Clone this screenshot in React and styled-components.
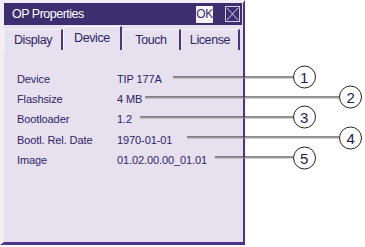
import React from "react";
import styled, { createGlobalStyle } from "styled-components";

const Global = createGlobalStyle`
  html, body { margin: 0; padding: 0; background: #ffffff; }
  body { font-family: "Liberation Sans", Arial, sans-serif; }
`;

const Page = styled.div`
  position: relative;
  width: 365px;
  height: 247px;
  background: #ffffff;
  overflow: hidden;
`;

const Window = styled.div`
  box-sizing: border-box;
  width: 245px;
  height: 245px;
  background: #e7e0ee;
  border-left: 4px solid #f2eef6;
  border-top: 3px solid #f2eef6;
  border-right: 2px solid #4a3589;
  border-bottom: 3px solid #4a3589;
  display: flex;
  flex-direction: column;
`;

const TitleBar = styled.div`
  height: 22px;
  margin-right: 1px;
  background: #3d2f6f;
  display: flex;
  align-items: center;
  padding: 0 2px 0 8px;
  color: #ffffff;
`;

const Title = styled.div`
  flex: 1;
  font-size: 12.5px;
  letter-spacing: -0.5px;
`;

const OkButton = styled.div`
  width: 17px;
  height: 17px;
  background: #f6f3f9;
  color: #3d2f6f;
  font-size: 12px;
  letter-spacing: -0.5px;
  display: flex;
  align-items: center;
  justify-content: center;
  margin-right: 12px;
`;

const CloseButton = styled.div`
  box-sizing: border-box;
  width: 15px;
  height: 16px;
  border: 1px solid #d4cce3;
  display: flex;
  align-items: center;
  justify-content: center;
`;

const TabRow = styled.div`
  height: 25px;
  display: flex;
  align-items: flex-end;
`;

const Tab = styled.div`
  box-sizing: border-box;
  width: 59px;
  height: ${(p) => (p.$selected ? 24 : 21)}px;
  border-top: 1px solid ${(p) => (p.$selected ? "#fdfcfe" : "#f3f0f7")};
  border-left: 1px solid ${(p) => (p.$selected ? "#fdfcfe" : "#f3f0f7")};
  border-right: 2px solid #4a3589;
  border-top-left-radius: 3px;
  background: #e7e0ee;
  color: #2b2566;
  font-size: 12.5px;
  letter-spacing: -0.4px;
  display: flex;
  align-items: center;
  justify-content: center;
  padding-bottom: ${(p) => (p.$selected ? 1 : 0)}px;
`;

const Content = styled.div`
  padding: 19px 0 0 13px;
  display: flex;
  flex-direction: column;
`;

const Row = styled.div`
  position: relative;
  height: 20.2px;
  display: flex;
  align-items: center;
  font-size: 11px;
  color: #2b2566;
  letter-spacing: -0.1px;
`;

const Label = styled.div`
  width: 100px;
`;

const Value = styled.div``;

const Callout = styled.div`
  position: absolute;
  left: ${(p) => p.$left}px;
  width: ${(p) => p.$width}px;
  top: 50%;
  transform: translateY(-50%);
  margin-top: -2px;
  display: flex;
  align-items: center;
`;

const Leader = styled.div`
  flex: 1;
  height: 0;
  border-top: 1px solid #1e1e1e;
  border-bottom: 1px solid #a0a0a0;
`;

const Bubble = styled.div`
  box-sizing: border-box;
  width: 23px;
  height: 23px;
  border: 1px solid #222222;
  border-radius: 50%;
  background: #ffffff;
  color: #1b1b5a;
  font-size: 15px;
  display: flex;
  align-items: center;
  justify-content: center;
`;

const ROW_X = 17;
const NEAR = 315.5;
const FAR = 362;

const rows = [
  { label: "Device", value: "TIP 177A", start: 173, end: NEAR, n: 1 },
  { label: "Flashsize", value: "4 MB", start: 145, end: FAR, n: 2 },
  { label: "Bootloader", value: "1.2", start: 140, end: NEAR, n: 3 },
  { label: "Bootl. Rel. Date", value: "1970-01-01", start: 187, end: FAR, n: 4 },
  { label: "Image", value: "01.02.00.00_01.01", start: 215, end: NEAR, n: 5 },
];

const tabs = ["Display", "Device", "Touch", "License"];

export default function App() {
  return (
    <>
      <Global />
      <Page>
        <Window>
          <TitleBar>
            <Title>OP Properties</Title>
            <OkButton>OK</OkButton>
            <CloseButton>
              <svg width="13" height="14" viewBox="0 0 13 14">
                <path d="M1 1 L12 13 M12 1 L1 13" stroke="#d8d0e8" strokeWidth="1" fill="none" />
              </svg>
            </CloseButton>
          </TitleBar>
          <TabRow>
            {tabs.map((t) => (
              <Tab key={t} $selected={t === "Device"}>
                {t}
              </Tab>
            ))}
          </TabRow>
          <Content>
            {rows.map((r) => (
              <Row key={r.n}>
                <Label>{r.label}</Label>
                <Value>{r.value}</Value>
                <Callout $left={r.start - ROW_X} $width={r.end - r.start}>
                  <Leader />
                  <Bubble>{r.n}</Bubble>
                </Callout>
              </Row>
            ))}
          </Content>
        </Window>
      </Page>
    </>
  );
}
